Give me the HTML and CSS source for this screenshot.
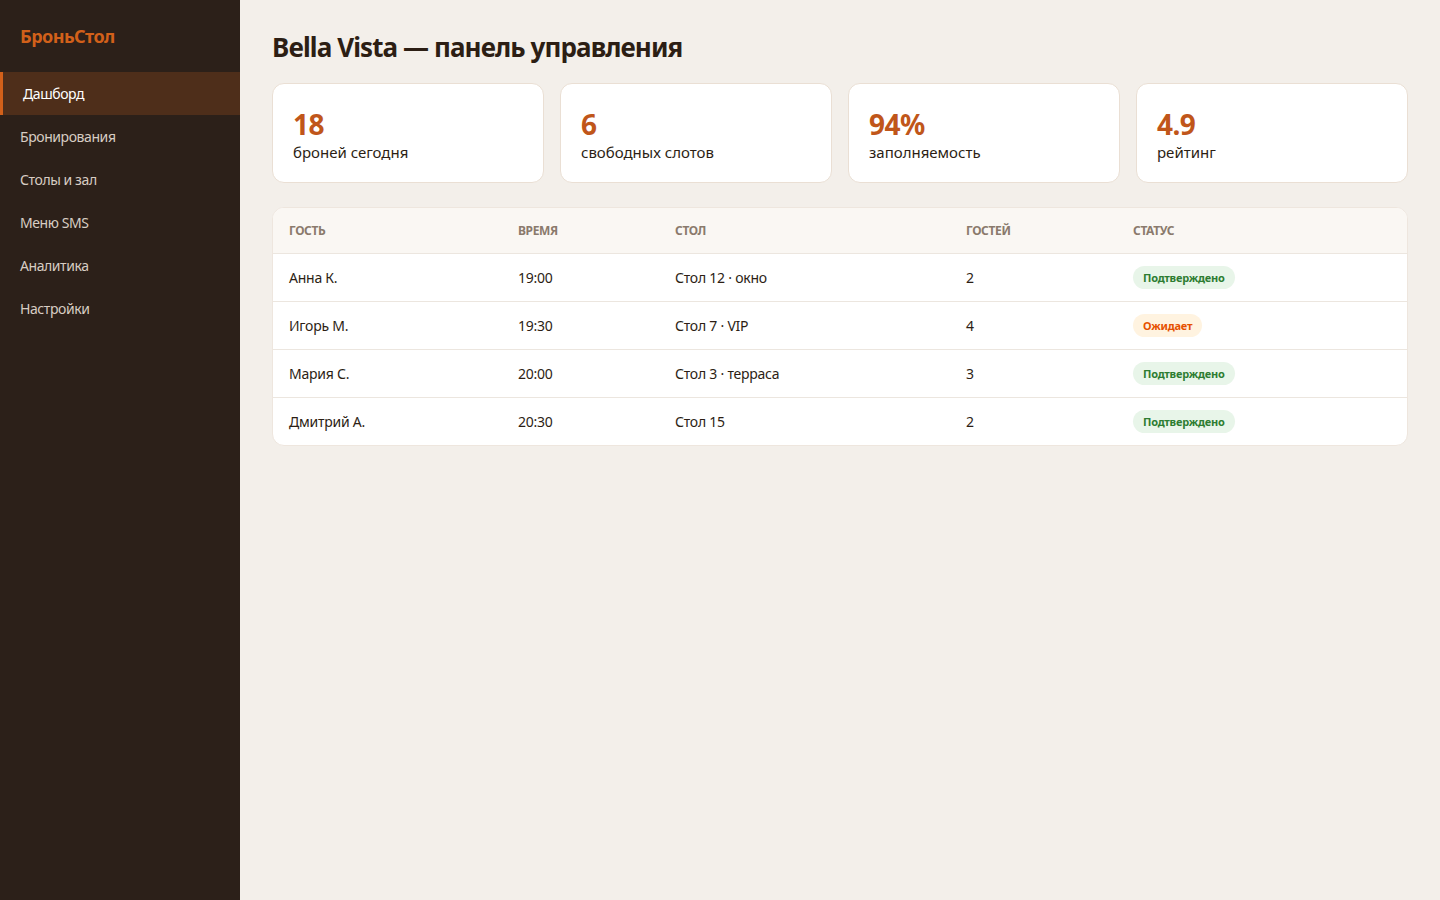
FILE: index.html
```html
<!DOCTYPE html>
<html lang="ru">
<head>
<meta charset="utf-8">
<title>БроньСтол — Bella Vista</title>
<link rel="stylesheet" href="styles.css">
</head>
<body>
<div class="app">
  <aside class="sidebar">
    <div class="logo">БроньСтол</div>
    <nav class="nav">
      <a class="nav-item active">Дашборд</a>
      <a class="nav-item">Бронирования</a>
      <a class="nav-item">Столы и зал</a>
      <a class="nav-item">Меню SMS</a>
      <a class="nav-item">Аналитика</a>
      <a class="nav-item">Настройки</a>
    </nav>
  </aside>
  <main class="main">
    <h1 class="title">Bella Vista — панель управления</h1>
    <div class="stats">
      <div class="card"><div class="num">18</div><div class="label">броней сегодня</div></div>
      <div class="card"><div class="num">6</div><div class="label">свободных слотов</div></div>
      <div class="card"><div class="num">94%</div><div class="label">заполняемость</div></div>
      <div class="card"><div class="num">4.9</div><div class="label">рейтинг</div></div>
    </div>
    <div class="table-wrap">
      <table class="table">
        <colgroup>
          <col class="c1"><col class="c2"><col class="c3"><col class="c4"><col class="c5">
        </colgroup>
        <thead>
          <tr><th>Гость</th><th>Время</th><th>Стол</th><th>Гостей</th><th>Статус</th></tr>
        </thead>
        <tbody>
          <tr><td>Анна К.</td><td>19:00</td><td>Стол 12 · окно</td><td>2</td><td><span class="badge ok">Подтверждено</span></td></tr>
          <tr><td>Игорь М.</td><td>19:30</td><td>Стол 7 · VIP</td><td>4</td><td><span class="badge wait">Ожидает</span></td></tr>
          <tr><td>Мария С.</td><td>20:00</td><td>Стол 3 · терраса</td><td>3</td><td><span class="badge ok">Подтверждено</span></td></tr>
          <tr><td>Дмитрий А.</td><td>20:30</td><td>Стол 15</td><td>2</td><td><span class="badge ok">Подтверждено</span></td></tr>
        </tbody>
      </table>
    </div>
  </main>
</div>
</body>
</html>
```

FILE: styles.css
```css
* { box-sizing: border-box; }
html, body { margin: 0; padding: 0; height: 100%; }
body {
  font-family: "Noto Sans", "Open Sans", sans-serif;
  letter-spacing: -0.015em;
  background: #f3efea;
  color: #2c1e14;
}
.app { display: flex; min-height: 100vh; }
.sidebar {
  width: 240px;
  flex-shrink: 0;
  background: #2c2019;
  color: #d8cdc3;
}
.logo {
  padding: 24px 20px 23px;
  font-size: 18px;
  font-weight: 700;
  color: #d2601a;
  line-height: 25px;
  letter-spacing: -0.03em;
}
.nav { display: flex; flex-direction: column; }
.nav-item {
  display: block;
  height: 43px;
  line-height: 43px;
  font-size: 14px;
  color: #d8cdc3;
  letter-spacing: -0.03em;
  border-left: 3px solid transparent;
  padding: 0 20px 0 17px;
}
.nav-item.active {
  background: #4e2e1a;
  border-left-color: #d2601a;
  color: #ffffff;
  padding-left: 20px;
}
.main {
  flex: 1;
  padding: 30px 32px 32px;
}
.title {
  margin: 0 0 19px;
  font-size: 26px;
  line-height: 34px;
  font-weight: 700;
  color: #2c1e14;
  letter-spacing: -0.035em;
}
.stats {
  display: grid;
  grid-template-columns: repeat(4, 1fr);
  gap: 16px;
  margin-bottom: 24px;
}
.card {
  background: #fff;
  border: 1px solid #eadfd4;
  border-radius: 12px;
  padding: 23px 20px 18px;
  height: 100px;
}
.num {
  font-size: 28px;
  font-weight: 700;
  color: #c0561a;
  line-height: 34px;
  letter-spacing: -0.02em;
}
.label {
  font-size: 15px;
  line-height: 22px;
  color: #2c1e14;
  letter-spacing: 0;
}
.table-wrap {
  background: #fff;
  border: 1px solid #eee6de;
  border-radius: 12px;
  overflow: hidden;
}
.table {
  width: 100%;
  border-collapse: collapse;
  table-layout: fixed;
}
.c1 { width: 229px; }
.c2 { width: 157px; }
.c3 { width: 291px; }
.c4 { width: 167px; }
.table th {
  background: #faf7f3;
  text-align: left;
  font-size: 12px;
  font-weight: 700;
  color: #8a7a6c;
  text-transform: uppercase;
  letter-spacing: -0.03em;
  height: 45px;
  padding: 0 16px;
  border-bottom: 1px solid #ece6df;
}
.table td {
  height: 48px;
  padding: 0 16px;
  font-size: 14px;
  color: #2c1e14;
  border-bottom: 1px solid #ece6df;
}
.table tbody tr:last-child td { border-bottom: none; }
.badge {
  display: inline-block;
  padding: 4px 10px;
  border-radius: 999px;
  font-size: 11px;
  font-weight: 700;
  line-height: 15px;
  letter-spacing: -0.02em;
}
.badge.ok { background: #e8f5e9; color: #2e7d32; }
.badge.wait { background: #fff3e0; color: #e65100; }
```
